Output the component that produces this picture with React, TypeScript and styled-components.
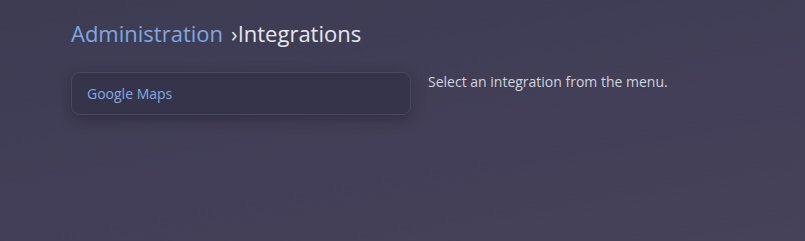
import React from "react";
import styled, { createGlobalStyle } from "styled-components";

const GlobalStyle = createGlobalStyle`
    html, body {
        margin: 0;
        padding: 0;
        height: 100%;
    }
    body {
        font-family: "Open Sans", "Noto Sans", sans-serif;
        background: linear-gradient(170deg, #3c3c53 0%, #433f58 60%, #464259 100%);
        background-attachment: fixed;
        min-height: 241px;
    }
`;

const Page = styled.div`
    padding: 17px 71px;
    min-height: 241px;
    box-sizing: border-box;
`;

const Title = styled.h1`
    margin: 0 0 23px;
    font-size: 22px;
    font-weight: 400;
    line-height: 32px;
    color: #e6e6ee;

    a {
        color: #7fa7e0;
        text-decoration: none;
    }
    .sep {
        margin-left: 8px;
    }
`;

const Layout = styled.div`
    display: flex;
    align-items: flex-start;
    gap: 17px;
`;

const Menu = styled.div`
    width: 340px;
    box-sizing: border-box;
    background: #35344a;
    border: 1px solid #4d4661;
    border-radius: 9px;
    box-shadow: 0 4px 14px rgba(20, 18, 32, 0.35);
    padding: 0 15px;
`;

const MenuItem = styled.div`
    height: 41px;
    display: flex;
    align-items: center;
    font-size: 14px;
    color: #83aae2;
`;

const Hint = styled.p`
    margin: 0;
    font-size: 14px;
    line-height: 20px;
    color: #d3d3dd;
`;

const App: React.FC = () => {
    return (
        <>
            <GlobalStyle />
            <Page>
                <Title>
                    <a href="#">Administration</a>
                    <span className="sep">›</span>Integrations
                </Title>
                <Layout>
                    <Menu>
                        <MenuItem>Google Maps</MenuItem>
                    </Menu>
                    <Hint>Select an integration from the menu.</Hint>
                </Layout>
            </Page>
        </>
    );
};

export default App;
